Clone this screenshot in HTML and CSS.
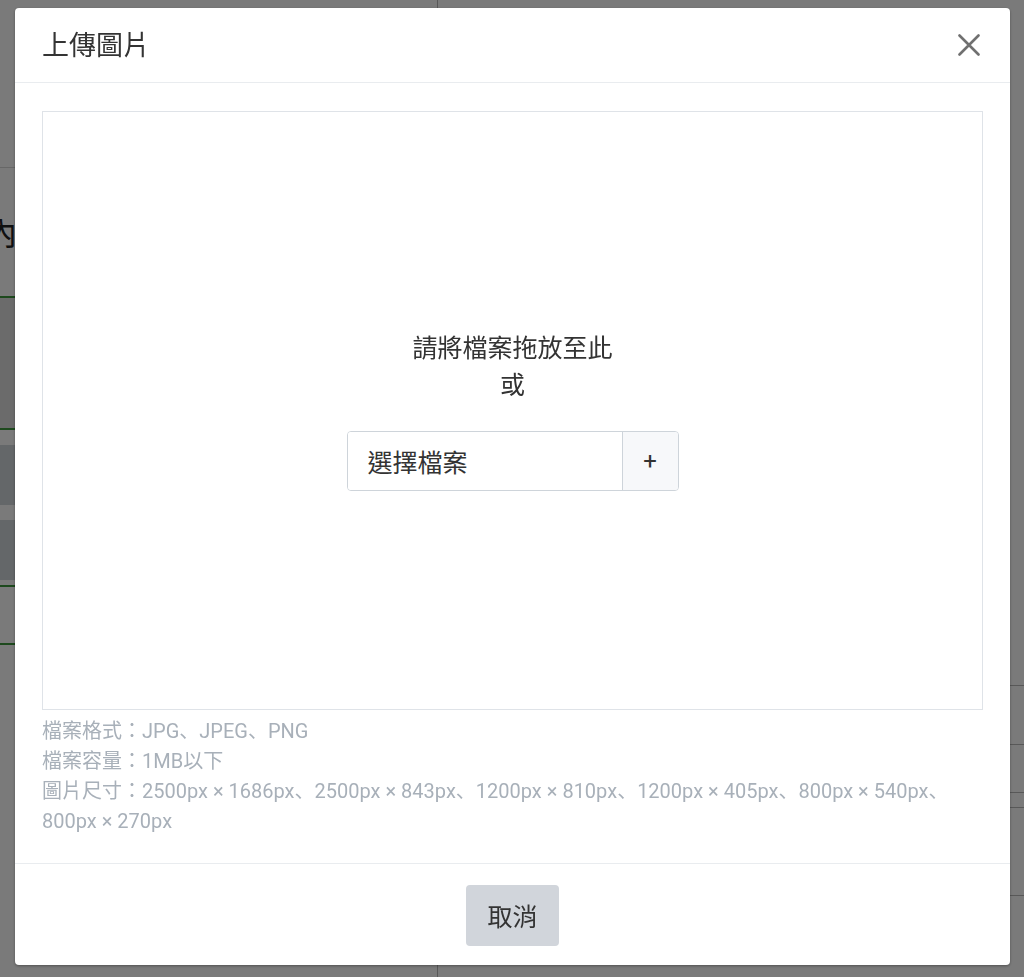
FILE: index.html
```html
<!DOCTYPE html>
<html lang="zh-TW">
<head>
<meta charset="utf-8">
<title>上傳圖片</title>
<link rel="stylesheet" href="styles.css">
</head>
<body>
<div class="page">
  <div class="col-left">
    <div class="top-bar"></div>
    <h2 class="heading">內容</h2>
    <div class="preview"></div>
    <div class="thumb"></div>
    <div class="thumb"></div>
    <div class="green-row"></div>
  </div>
  <div class="col-right">
    <div class="row r1"></div>
    <div class="row r2"></div>
    <div class="row r3"></div>
    <div class="row r4"></div>
    <div class="row r5"></div>
  </div>
</div>

<div class="overlay"></div>

<div class="modal">
  <div class="modal-header">
    <h5 class="modal-title">上傳圖片</h5>
    <button class="close-btn" aria-label="close">
      <svg width="22" height="22" viewBox="0 0 22 22"><path d="M1.5 1.5 L20.5 20.5 M20.5 1.5 L1.5 20.5" stroke="#707070" stroke-width="2.6" stroke-linecap="round" fill="none"/></svg>
    </button>
  </div>
  <div class="modal-body">
    <div class="dropzone">
      <p class="drop-text">請將檔案拖放至此<br>或</p>
      <div class="input-group">
        <span class="file-label">選擇檔案</span>
        <span class="file-add">+</span>
      </div>
    </div>
    <div class="notes">
      <div>檔案格式<span class="punct">：</span>JPG<span class="punct">、</span>JPEG<span class="punct">、</span>PNG</div>
      <div>檔案容量<span class="punct">：</span>1MB以下</div>
      <div>圖片尺寸<span class="punct">：</span>2500px × 1686px<span class="punct">、</span>2500px × 843px<span class="punct">、</span>1200px × 810px<span class="punct">、</span>1200px × 405px<span class="punct">、</span>800px × 540px<span class="punct">、</span>800px × 270px</div>
    </div>
  </div>
  <div class="modal-footer">
    <button class="btn-cancel">取消</button>
  </div>
</div>
</body>
</html>
```
FILE: styles.css
```css
html, body {
  margin: 0;
  padding: 0;
  background: #ffffff;
  font-family: Roboto, "Noto Sans CJK TC", "Noto Sans", sans-serif;
  color: #333;
  overflow: hidden;
}

.page {
  display: grid;
  grid-template-columns: 437px 1fr;
  width: 1024px;
  height: 977px;
}

.col-left {
  display: flex;
  flex-direction: column;
}

.top-bar {
  height: 167px;
  border-bottom: 1px solid #d8d8d8;
  flex: none;
}

.heading {
  margin: 46px 0 0 -15px;
  font-size: 32px;
  font-weight: 400;
  line-height: 40px;
  color: #222;
  height: 40px;
}

.preview {
  margin-top: 42px;
  height: 130px;
  border-top: 2px solid #3d9a3d;
  border-bottom: 2px solid #3d9a3d;
  background: #e0e0e0;
  flex: none;
}

.thumb {
  margin-top: 15px;
  height: 60px;
  background: #d2d7dc;
  flex: none;
}

.green-row {
  margin-top: 5px;
  height: 56px;
  border-top: 2px solid #3d9a3d;
  border-bottom: 2px solid #3d9a3d;
  flex: none;
}

.col-right {
  border-left: 1px solid #b8b8b8;
  display: flex;
  flex-direction: column;
}

.row {
  border-bottom: 1px solid #b8b8b8;
  flex: none;
}
.r1 { height: 685px; }
.r2 { height: 58px; }
.r3 { height: 47px; }
.r4 { height: 14px; }
.r5 { height: 87px; }

.overlay {
  position: fixed;
  inset: 0;
  background: rgba(0, 0, 0, 0.52);
}

.modal {
  position: fixed;
  left: 15px;
  top: 8px;
  width: 995px;
  height: 957px;
  background: #fff;
  border-radius: 4px;
  box-shadow: 0 1px 3px rgba(0, 0, 0, 0.35);
  display: flex;
  flex-direction: column;
  overflow: hidden;
}

.modal-header {
  flex: none;
  height: 74px;
  border-bottom: 1px solid #e9ecef;
  display: flex;
  align-items: center;
  justify-content: space-between;
  padding: 0 30px 0 27px;
}

.modal-title {
  margin: 0;
  font-size: 27px;
  font-weight: 400;
  line-height: 40px;
  color: #343434;
  padding-top: 1px;
}

.close-btn {
  border: 0;
  background: none;
  padding: 0;
  width: 22px;
  height: 22px;
  display: block;
}
.close-btn svg {
  display: block;
}

.modal-body {
  flex: 1;
  min-height: 0;
  padding: 28px 27px 27px;
  display: flex;
  flex-direction: column;
}

.dropzone {
  flex: none;
  height: 599px;
  box-sizing: border-box;
  border: 1px solid #dfe3e8;
  display: flex;
  flex-direction: column;
  align-items: center;
  justify-content: center;
}

.drop-text {
  margin: 0;
  text-align: center;
  font-size: 25px;
  line-height: 37.5px;
  color: #333;
}

.input-group {
  margin-top: 26px;
  margin-bottom: 1px;
  display: flex;
  width: 332px;
  height: 60px;
  box-sizing: border-box;
  border: 1px solid #ced4da;
  border-radius: 4px;
  overflow: hidden;
}

.file-label {
  flex: 1;
  display: flex;
  align-items: center;
  padding: 0 20px;
  font-size: 25px;
  color: #333;
  background: #fff;
}

.file-add {
  flex: none;
  width: 55px;
  border-left: 1px solid #ced4da;
  background: #f7f8fa;
  display: flex;
  align-items: center;
  justify-content: center;
  font-size: 24px;
  font-weight: 400;
  color: #333;
}

.notes {
  margin-top: 6px;
  font-size: 20px;
  line-height: 30px;
  color: #a8b0b9;
}

.punct {
  font-family: "Noto Sans CJK JP", sans-serif;
  line-height: 0;
}

.modal-footer {
  flex: none;
  height: 101px;
  border-top: 1px solid #e9ecef;
  display: flex;
  align-items: center;
  justify-content: center;
}

.btn-cancel {
  width: 93px;
  height: 61px;
  border: 0;
  border-radius: 4px;
  background: #d1d5db;
  font-family: Roboto, "Noto Sans CJK TC", sans-serif;
  font-size: 25px;
  color: #333;
  padding: 0;
  margin-top: 1px;
}
```
